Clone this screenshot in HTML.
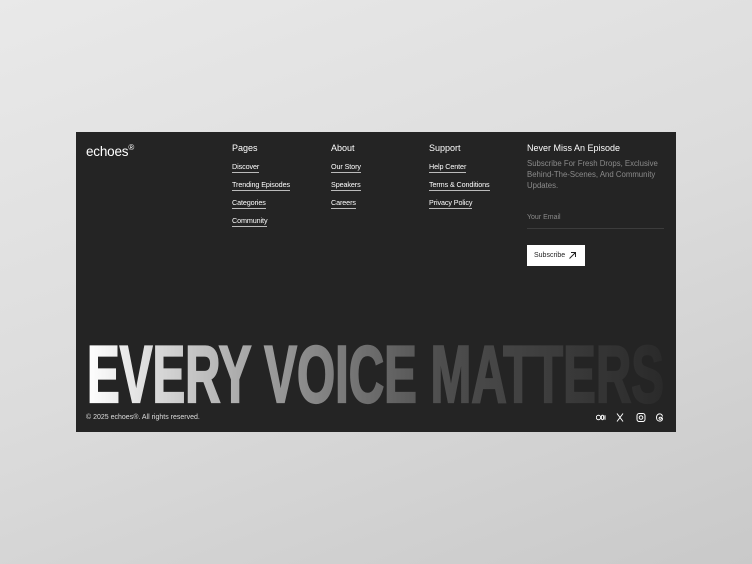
<!DOCTYPE html>
<html><head><meta charset="utf-8"><style>
*{margin:0;padding:0;box-sizing:border-box}
body{width:752px;height:564px;background:linear-gradient(160deg,#e9e9e9 0%,#dcdcdc 50%,#c9c9c9 100%);font-family:"Liberation Sans",sans-serif;position:relative;overflow:hidden}
.p{position:absolute;left:76px;top:132px;width:600px;height:300px;background:#242424;color:#fff}
.a{position:absolute}
.logo{left:10px;top:11px;font-size:13.5px;letter-spacing:-0.2px}
.logo sup{font-size:8px;vertical-align:6px}
.h{font-size:9px;top:11px}
.l{font-size:7.2px;position:absolute;border-bottom:1px solid #bbb;padding-bottom:1px;white-space:nowrap;letter-spacing:-0.1px}
.d{left:451px;top:26px;font-size:7.8px;color:#8a8a8a;line-height:11px;width:140px}
.em{left:451px;top:82px;font-size:7px;color:#8a8a8a}
.ln{left:451px;top:96px;width:137px;height:1px;background:#3c3c3c}
.btn{left:451px;top:113px;width:58px;height:21px;background:#fff;color:#222;font-size:7px;line-height:21px;padding-left:7px}
.cp{left:10px;top:281px;font-size:7px;color:#ddd}
</style></head><body>
<div class="p">
<div class="a logo">echoes<sup>®</sup></div>
<div class="a h" style="left:156px">Pages</div>
<div class="l" style="left:156px;top:30px">Discover</div>
<div class="l" style="left:156px;top:48px">Trending Episodes</div>
<div class="l" style="left:156px;top:66px">Categories</div>
<div class="l" style="left:156px;top:84px">Community</div>
<div class="a h" style="left:255px">About</div>
<div class="l" style="left:255px;top:30px">Our Story</div>
<div class="l" style="left:255px;top:48px">Speakers</div>
<div class="l" style="left:255px;top:66px">Careers</div>
<div class="a h" style="left:353px">Support</div>
<div class="l" style="left:353px;top:30px">Help Center</div>
<div class="l" style="left:353px;top:48px">Terms &amp; Conditions</div>
<div class="l" style="left:353px;top:66px">Privacy Policy</div>
<div class="a h" style="left:451px">Never Miss An Episode</div>
<div class="a d">Subscribe For Fresh Drops, Exclusive Behind-The-Scenes, And Community Updates.</div>
<div class="a em">Your Email</div>
<div class="a ln"></div>
<div class="a btn">Subscribe <svg width="9" height="9" viewBox="0 0 9 9" style="position:absolute;left:41px;top:6px"><path d="M1.5 7.5L7.5 1.5M3 1.5h4.5V6" stroke="#222" stroke-width="1" fill="none"/></svg></div>
<svg class="a" style="left:0;top:200px" width="600" height="80">
<defs><linearGradient id="g" x1="0" x2="1"><stop offset="0" stop-color="#fff"/><stop offset="0.3" stop-color="#a0a0a0"/><stop offset="0.6" stop-color="#505050"/><stop offset="1" stop-color="#2a2a2a"/></linearGradient></defs>
<text x="11" y="70" font-family="Liberation Sans" font-weight="bold" font-size="81" textLength="577" lengthAdjust="spacingAndGlyphs" fill="url(#g)" stroke="url(#g)" stroke-width="2.2">EVERY VOICE MATTERS</text>
</svg>
<div class="a cp" style="top:282px">© 2025 echoes®. All rights reserved.</div>
<svg class="a" style="left:520px;top:280px" width="80" height="11" viewBox="0 0 80 11" fill="none" stroke="#fff" stroke-width="1">
<circle cx="2.5" cy="5.5" r="2.2"/><ellipse cx="6.5" cy="5.5" rx="1.2" ry="2.2"/><line x1="9" y1="3.3" x2="9" y2="7.7"/>
<path d="M21 1.5l6 8M27 1.5l-6 8"/>
<rect x="41" y="1.5" width="8" height="8" rx="2.2"/><circle cx="45" cy="5.5" r="1.8"/>
<path d="M66.5 4.5c-.3-1.8-1.5-2.6-2.8-2.6-2 0-3.2 1.6-3.2 3.6s1.2 3.6 3.2 3.6c1.6 0 2.8-1 2.8-2.2 0-1.3-1.3-1.8-2.5-1.6-1 .2-1.3 1.3-.6 1.8.8.5 2 0 2.2-1"/>
</svg>
</div>
</body></html>
